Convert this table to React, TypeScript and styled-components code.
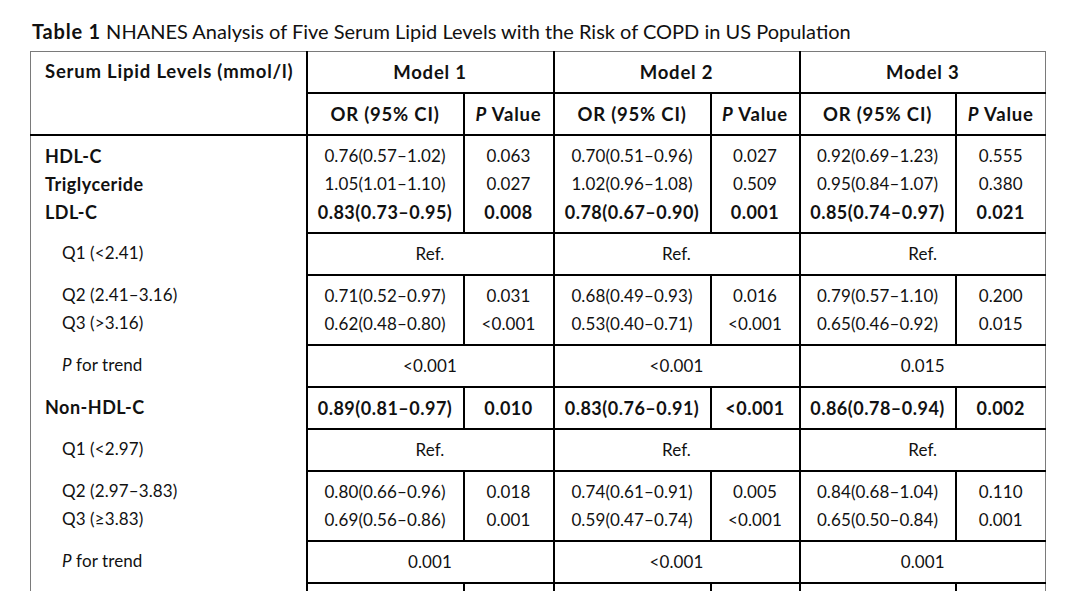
import * as React from 'react'
import styled, { createGlobalStyle } from 'styled-components'

const GlobalStyle = createGlobalStyle`
  html, body {
    margin: 0;
    padding: 0;
    background: #ffffff;
    overflow: hidden;
  }
  body {
    font-family: Lato, 'Open Sans', sans-serif;
    color: #111111;
  }
`

interface ILabel {
  text: string
  bold?: boolean
  sub?: boolean
  italicP?: boolean
}

interface IModelValues {
  or: string[]
  p: string[]
}

interface IGroupRow {
  kind: 'group'
  labels: ILabel[]
  bold?: boolean[]
  models: IModelValues[]
}

interface ISpanRow {
  kind: 'span'
  label: ILabel
  values: string[]
}

type IRow = IGroupRow | ISpanRow

const rows: IRow[] = [
  {
    kind: 'group',
    labels: [
      { text: 'HDL-C', bold: true },
      { text: 'Triglyceride', bold: true },
      { text: 'LDL-C', bold: true }
    ],
    bold: [false, false, true],
    models: [
      {
        or: ['0.76(0.57–1.02)', '1.05(1.01–1.10)', '0.83(0.73–0.95)'],
        p: ['0.063', '0.027', '0.008']
      },
      {
        or: ['0.70(0.51–0.96)', '1.02(0.96–1.08)', '0.78(0.67–0.90)'],
        p: ['0.027', '0.509', '0.001']
      },
      {
        or: ['0.92(0.69–1.23)', '0.95(0.84–1.07)', '0.85(0.74–0.97)'],
        p: ['0.555', '0.380', '0.021']
      }
    ]
  },
  {
    kind: 'span',
    label: { text: 'Q1 (<2.41)', sub: true },
    values: ['Ref.', 'Ref.', 'Ref.']
  },
  {
    kind: 'group',
    labels: [
      { text: 'Q2 (2.41–3.16)', sub: true },
      { text: 'Q3 (>3.16)', sub: true }
    ],
    models: [
      { or: ['0.71(0.52–0.97)', '0.62(0.48–0.80)'], p: ['0.031', '<0.001'] },
      { or: ['0.68(0.49–0.93)', '0.53(0.40–0.71)'], p: ['0.016', '<0.001'] },
      { or: ['0.79(0.57–1.10)', '0.65(0.46–0.92)'], p: ['0.200', '0.015'] }
    ]
  },
  {
    kind: 'span',
    label: { text: ' for trend', sub: true, italicP: true },
    values: ['<0.001', '<0.001', '0.015']
  },
  {
    kind: 'group',
    labels: [{ text: 'Non-HDL-C', bold: true }],
    bold: [true],
    models: [
      { or: ['0.89(0.81–0.97)'], p: ['0.010'] },
      { or: ['0.83(0.76–0.91)'], p: ['<0.001'] },
      { or: ['0.86(0.78–0.94)'], p: ['0.002'] }
    ]
  },
  {
    kind: 'span',
    label: { text: 'Q1 (<2.97)', sub: true },
    values: ['Ref.', 'Ref.', 'Ref.']
  },
  {
    kind: 'group',
    labels: [
      { text: 'Q2 (2.97–3.83)', sub: true },
      { text: 'Q3 (≥3.83)', sub: true }
    ],
    models: [
      { or: ['0.80(0.66–0.96)', '0.69(0.56–0.86)'], p: ['0.018', '0.001'] },
      { or: ['0.74(0.61–0.91)', '0.59(0.47–0.74)'], p: ['0.005', '<0.001'] },
      { or: ['0.84(0.68–1.04)', '0.65(0.50–0.84)'], p: ['0.110', '0.001'] }
    ]
  },
  {
    kind: 'span',
    label: { text: ' for trend', sub: true, italicP: true },
    values: ['0.001', '<0.001', '0.001']
  }
]

const Page = styled.div`
  padding: 18px 0 0 30px;
`

const Caption = styled.div`
  font-size: 20px;
  line-height: 26px;
  margin: 0 0 7px 2px;
`

const CaptionLead = styled.span`
  font-weight: 700;
  letter-spacing: 0.8px;
`

const Table = styled.table`
  border-collapse: collapse;
  table-layout: fixed;
  width: 1015px;
  font-size: 17px;
`

const HeadCell = styled.th<{ $left?: boolean; $top?: boolean; $last?: boolean }>`
  font-weight: 700;
  font-size: 18.5px;
  letter-spacing: 0.8px;
  white-space: nowrap;
  height: 40px;
  padding: 0 6px;
  text-align: ${({ $left }) => ($left ? 'left' : 'center')};
  vertical-align: ${({ $left }) => ($left ? 'top' : 'middle')};
  padding-top: ${({ $left }) => ($left ? '8px' : '0')};
  padding-left: ${({ $left }) => ($left ? '14px' : '6px')};
  border: 2px solid #000;
  border-top: ${({ $top }) => ($top ? '1px solid #7a7a7a' : '2px solid #000')};
  border-left: ${({ $left }) => ($left ? '1px solid #7a7a7a' : '2px solid #000')};
  border-right: ${({ $last }) => ($last ? '1px solid #7a7a7a' : '2px solid #000')};
`

const LabelCell = styled.td`
  padding: 6px 12px 6px 14px;
  border-left: 1px solid #7a7a7a;
  border-right: 2px solid #000;
  vertical-align: top;
`

const ValueCell = styled.td<{ $last?: boolean }>`
  padding: 6px 2px;
  text-align: center;
  vertical-align: top;
  border: 2px solid #000;
  border-right: ${({ $last }) => ($last ? '1px solid #7a7a7a' : '2px solid #000')};
`

const Line = styled.div<{ $bold?: boolean; $sub?: boolean }>`
  line-height: 28px;
  height: 28px;
  white-space: nowrap;
  font-weight: ${({ $bold }) => ($bold ? 700 : 400)};
  font-size: ${({ $bold }) => ($bold ? '18px' : '17px')};
  letter-spacing: ${({ $bold }) => ($bold ? '0.5px' : '0.1px')};
  padding-left: ${({ $sub }) => ($sub ? '17px' : '0')};
`

const ItalicP = styled.i`
  font-style: italic;
`

const LabelLine = ({ label }: { label: ILabel }) => (
  <Line $bold={label.bold} $sub={label.sub}>
    {label.italicP && <ItalicP>P</ItalicP>}
    {label.text}
  </Line>
)

const renderRow = (row: IRow, index: number) => {
  if (row.kind === 'span') {
    return (
      <tr key={index}>
        <LabelCell>
          <LabelLine label={row.label} />
        </LabelCell>
        {row.values.map((value, i) => (
          <ValueCell key={i} colSpan={2} $last={i === 2}>
            <Line>{value}</Line>
          </ValueCell>
        ))}
      </tr>
    )
  }
  const bold = row.bold || []
  return (
    <tr key={index}>
      <LabelCell>
        {row.labels.map((label, i) => (
          <LabelLine key={i} label={label} />
        ))}
      </LabelCell>
      {row.models.map((model, m) => (
        <React.Fragment key={m}>
          <ValueCell>
            {model.or.map((v, i) => (
              <Line key={i} $bold={bold[i]}>
                {v}
              </Line>
            ))}
          </ValueCell>
          <ValueCell $last={m === 2}>
            {model.p.map((v, i) => (
              <Line key={i} $bold={bold[i]}>
                {v}
              </Line>
            ))}
          </ValueCell>
        </React.Fragment>
      ))}
    </tr>
  )
}

export default function App() {
  return (
    <Page>
      <GlobalStyle />
      <Caption>
        <CaptionLead>Table 1</CaptionLead> NHANES Analysis of Five Serum Lipid
        Levels with the Risk of COPD in US Population
      </Caption>
      <Table>
        <colgroup>
          <col style={{ width: 276 }} />
          <col style={{ width: 157 }} />
          <col style={{ width: 90 }} />
          <col style={{ width: 157 }} />
          <col style={{ width: 89 }} />
          <col style={{ width: 156 }} />
          <col style={{ width: 90 }} />
        </colgroup>
        <thead>
          <tr>
            <HeadCell rowSpan={2} $left $top>
              Serum Lipid Levels (mmol/l)
            </HeadCell>
            <HeadCell colSpan={2} $top>
              Model 1
            </HeadCell>
            <HeadCell colSpan={2} $top>
              Model 2
            </HeadCell>
            <HeadCell colSpan={2} $top $last>
              Model 3
            </HeadCell>
          </tr>
          <tr>
            {[0, 1, 2].map(m => (
              <React.Fragment key={m}>
                <HeadCell>OR (95% CI)</HeadCell>
                <HeadCell $last={m === 2}>
                  <ItalicP>P</ItalicP> Value
                </HeadCell>
              </React.Fragment>
            ))}
          </tr>
        </thead>
        <tbody>
          {rows.map(renderRow)}
          <tr>
            <LabelCell>
              <Line>&nbsp;</Line>
            </LabelCell>
            {[0, 1, 2, 3, 4, 5].map(i => (
              <ValueCell key={i} $last={i === 5}>
                <Line>&nbsp;</Line>
              </ValueCell>
            ))}
          </tr>
        </tbody>
      </Table>
    </Page>
  )
}
